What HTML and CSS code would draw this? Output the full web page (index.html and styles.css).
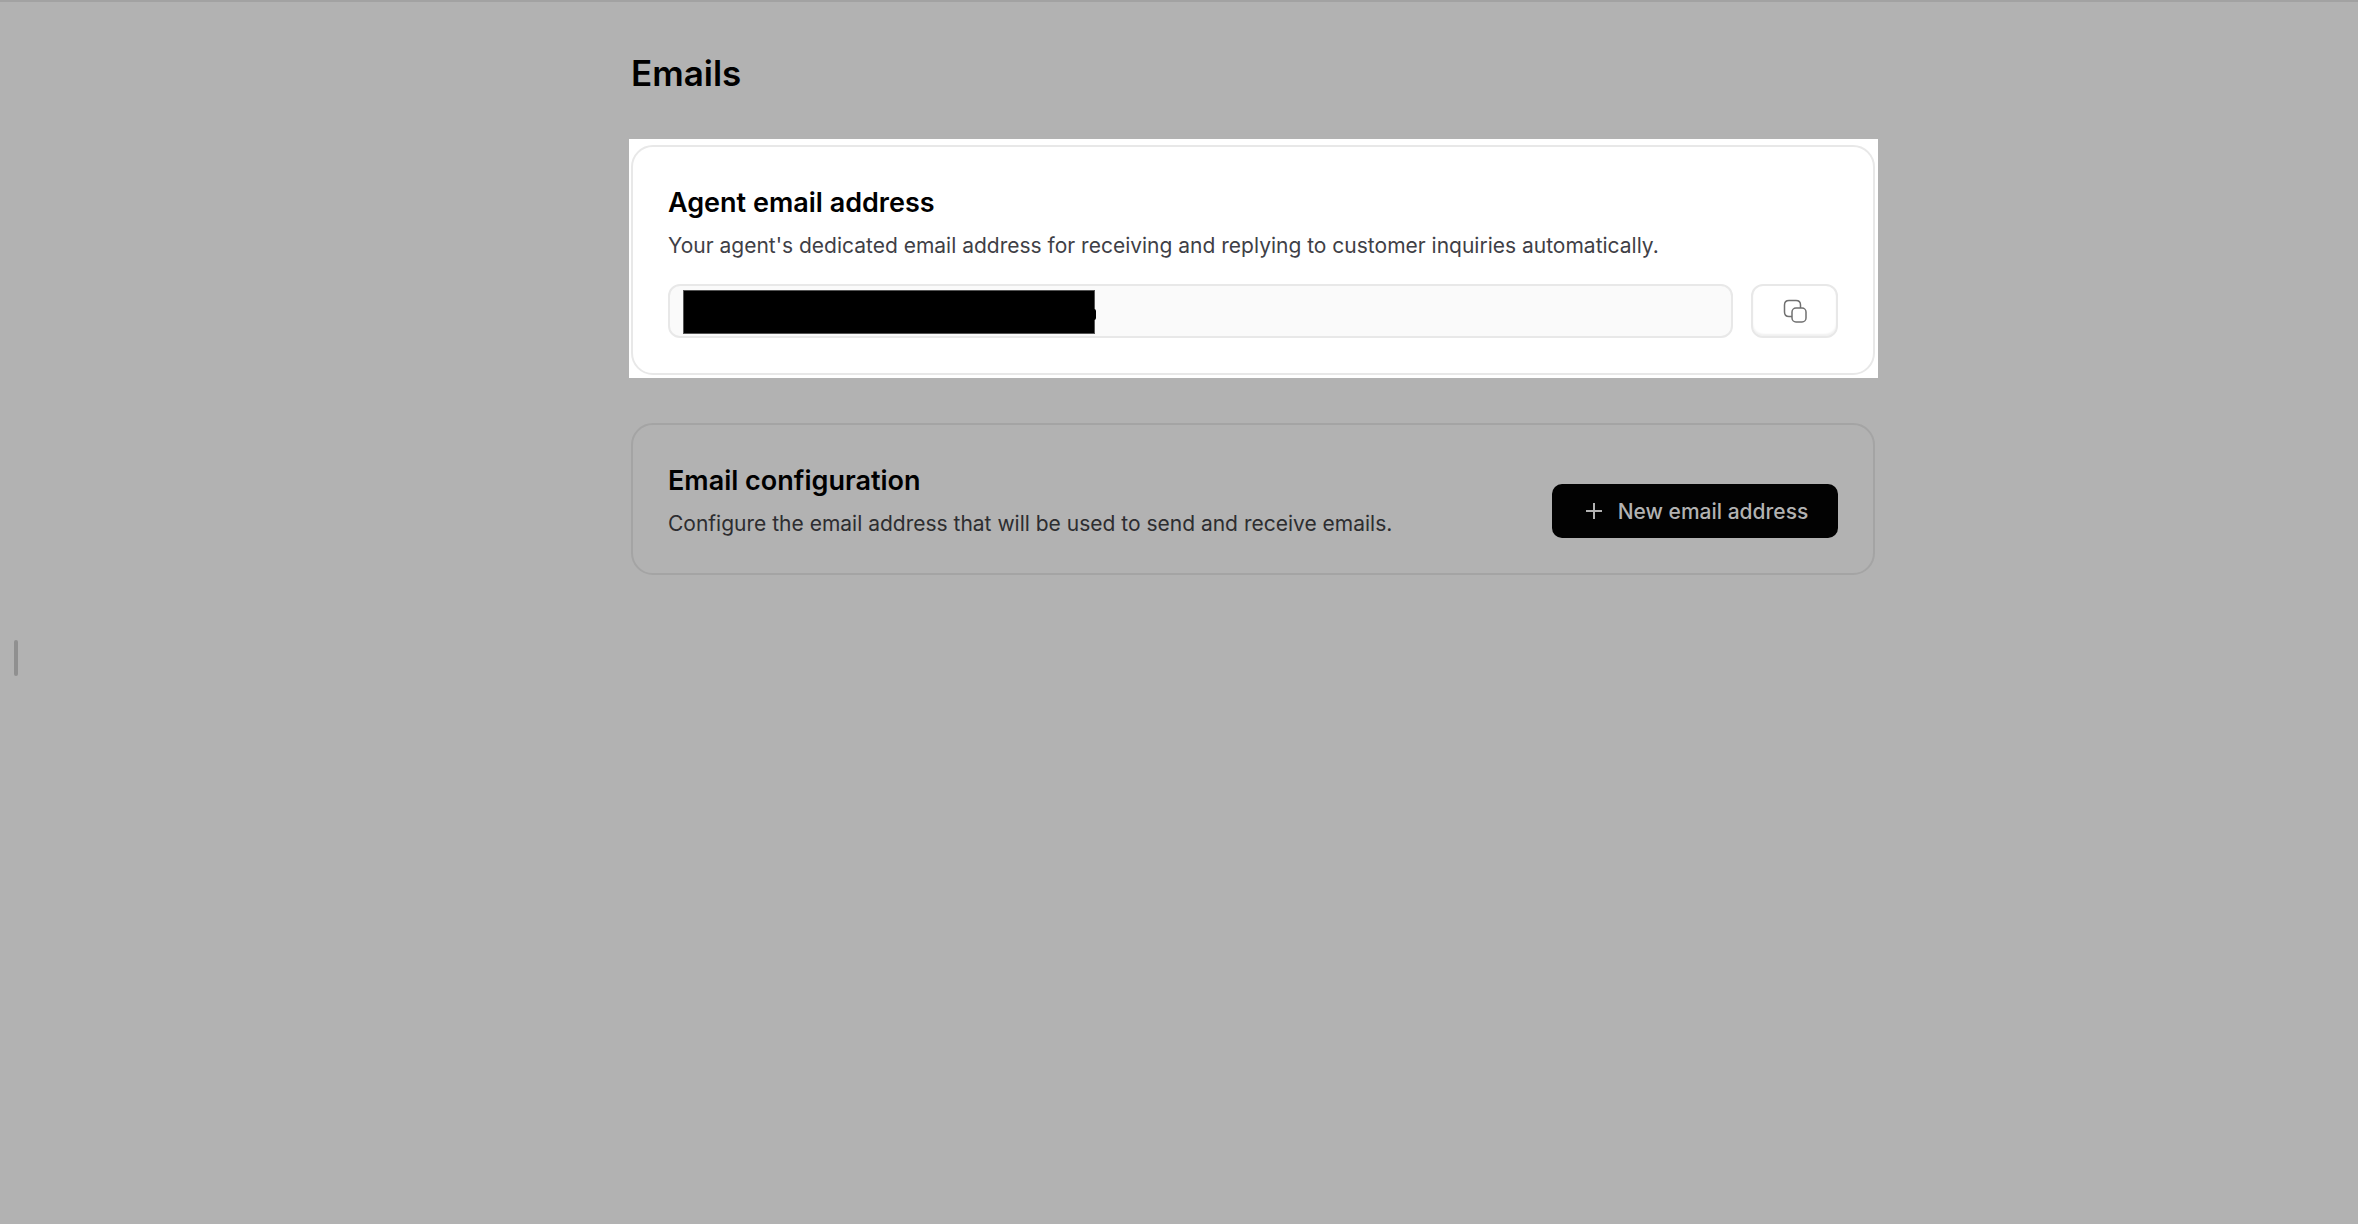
FILE: index.html
```html
<!DOCTYPE html>
<html lang="en">
<head>
  <meta charset="UTF-8">
  <meta name="viewport" content="width=device-width, initial-scale=1.0">
  <title>Emails</title>
  <link rel="stylesheet" href="styles.css">
</head>
<body>
  <div class="page">
    <div class="rail">
      <div class="rail-handle"></div>
    </div>

    <main class="content">
      <h1 class="page-title">Emails</h1>

      <!-- Highlighted card -->
      <div class="spotlight">
        <section class="card">
          <h2 class="card-title"><label for="agent-email">Agent email address</label></h2>
          <p class="card-text">Your agent's dedicated email address for receiving and replying to customer inquiries automatically.</p>
          <div class="email-row">
            <div class="email-field">
              <input class="email-input" id="agent-email" type="text" readonly>
              <span class="redacted"></span>
            </div>
            <button class="copy-btn" type="button" aria-label="Copy">
              <svg class="icon" viewBox="0 0 24 24" fill="none" stroke="currentColor">
                <path d="M9 17.500H6Q1.500 17.500 1.500 13V6Q1.500 1.500 6 1.500H13Q17.500 1.500 17.500 6V9"/>
                <rect x="9" y="9" width="14" height="14" rx="4"/>
              </svg>
            </button>
          </div>
        </section>
      </div>

      <section class="card card-split">
        <div>
          <h2 class="card-title">Email configuration</h2>
          <p class="card-text">Configure the email address that will be used to send and receive emails.</p>
        </div>
        <button class="new-btn" type="button">
          <svg class="plus" viewBox="0 0 16 16" fill="none" stroke="currentColor">
            <path d="M8 0v16M0 8h16"/>
          </svg>
          New email address
        </button>
      </section>
    </main>
  </div>
</body>
</html>
```

FILE: styles.css
```css
* {
  box-sizing: border-box;
}

body {
  margin: 0;
  font-family: Inter, sans-serif;
  background: #b2b2b2;
  color: #000;
}

h1, h2, p {
  margin: 0;
}

.page {
  display: flex;
  min-height: 100vh;
  border-top: 2px solid #a2a2a2;
}

/* ===== Left rail ===== */
.rail {
  display: flex;
  align-items: center;
  flex: 0 0 148px;
  padding: 90px 0 0 14px;
}

.rail-handle {
  width: 4px;
  height: 36px;
  border-radius: 2px;
  background: #909090;
}

/* ===== Content ===== */
.content {
  flex: 1;
  max-width: 1244px;
  margin: 0 auto;
  padding: 44px 0;
}

.page-title {
  margin-bottom: 39px;
  font-size: 35px;
  line-height: 54px;
  font-weight: 600;
}

.spotlight {
  margin: 0 -3px 45px -2px;
  padding: 6px 3px 3px 2px;
  background: #fff;
}

.spotlight .card {
  border-color: #e8e8e8;
}

/* ===== Cards ===== */
.card {
  padding: 35px;
  border: 2px solid #a4a4a4;
  border-radius: 22px;
}

.card-split {
  display: flex;
  align-items: flex-end;
  justify-content: space-between;
}

.card-title {
  margin-bottom: 8px;
  font-size: 27px;
  line-height: 42px;
  font-weight: 600;
}

.card-text {
  font-size: 21px;
  line-height: 28px;
  color: #2d2d30;
}

.spotlight .card-text {
  color: #3f3f46;
}

/* ===== Email row ===== */
.email-row {
  display: flex;
  gap: 18px;
  margin-top: 24px;
}

.email-field {
  position: relative;
  flex: 1;
}

.email-input {
  display: block;
  width: 100%;
  height: 54px;
  padding: 0 16px;
  border: 2px solid #e8e8e8;
  border-radius: 12px;
  background: #fafafa;
  font: inherit;
  font-size: 21px;
}

.redacted {
  position: absolute;
  top: 6px;
  left: 15px;
  width: 412px;
  height: 44px;
  border: 1px solid #555;
  background: #000;
}

.redacted::after {
  content: "";
  position: absolute;
  top: 18px;
  right: -2px;
  width: 3px;
  height: 11px;
  border-radius: 0 2px 2px 0;
  background: #000;
}

/* ===== Buttons ===== */
.copy-btn {
  display: flex;
  align-items: center;
  justify-content: center;
  width: 87px;
  height: 54px;
  border: 2px solid #e8e8e8;
  border-radius: 12px;
  background: #fff;
  box-shadow: inset 0 -2px 2px #f1f1f1;
  color: #707070;
}

.icon {
  width: 24px;
  height: 24px;
  stroke-width: 1.5;
}

.new-btn {
  display: flex;
  align-items: center;
  justify-content: center;
  gap: 16px;
  width: 286px;
  height: 54px;
  padding: 0 0 0 4px;
  border: 0;
  border-radius: 10px;
  background: #020202;
  color: #b2b2b2;
  font: inherit;
  font-size: 21px;
  font-weight: 500;
  white-space: nowrap;
}

.plus {
  width: 16px;
  height: 16px;
  stroke-width: 2;
}
```
